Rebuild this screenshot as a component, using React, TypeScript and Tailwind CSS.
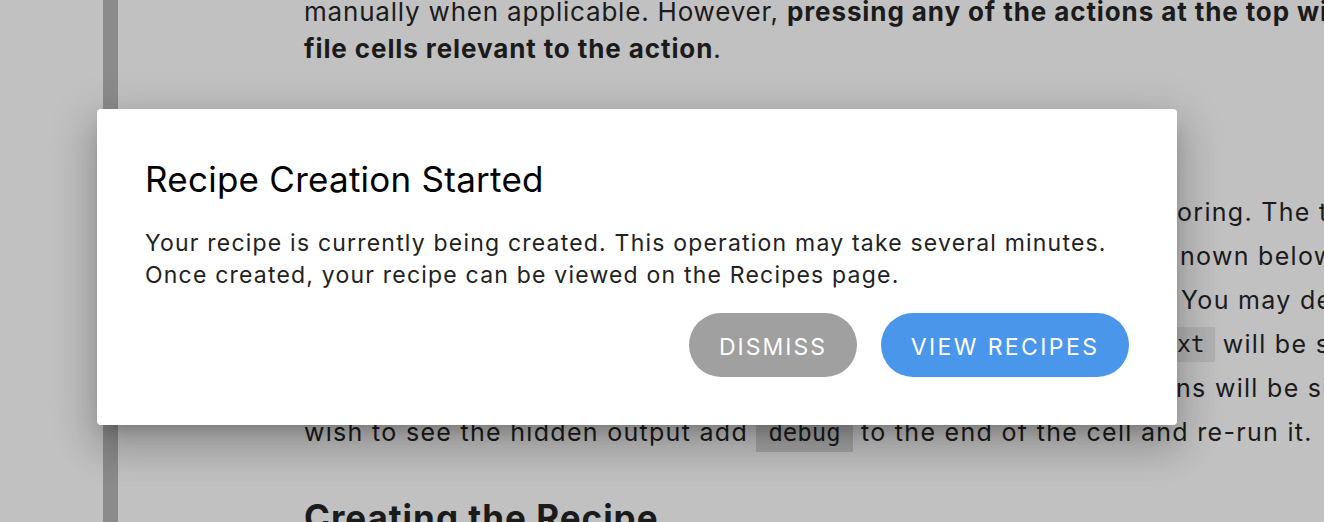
export default function App() {
  return (
    <main className="relative h-[522px] w-[1324px] overflow-hidden bg-[#c1c1c1] font-['Inter',sans-serif] text-[#1b1b1b]">
      {/* page behind the dimmed overlay */}
      <div className="flex h-full">
        <div className="w-[103px] shrink-0" />
        <div className="w-[15px] shrink-0 bg-[#8b8b8b]" />
        <div className="w-[186px] shrink-0" />

        <article className="min-w-0 flex-1 whitespace-nowrap text-[25px] tracking-[1.3px]">
          <div className="mt-[-7px] text-[26px] leading-[37px] tracking-[0.8px]">
            <div>
              manually when applicable. However,{" "}
              <b className="font-bold tracking-[0.9px]">pressing any of the actions at the top will run the</b>
            </div>
            <div>
              <b className="font-bold tracking-[0.9px]">file cells relevant to the action</b>.
            </div>
          </div>

          <h3 className="mt-[50px] h-[73px] text-[30px] font-bold leading-[40px]">Monitoring</h3>

          <div className="leading-[44px]">
            <div className="flex">
              <span className="inline-block w-[873px] shrink-0 overflow-hidden">The cells below are used for recipe monit</span>
              <span className="shrink-0">oring. The table</span>
            </div>
            <div className="flex">
              <span className="inline-block w-[876px] shrink-0 overflow-hidden">updates every few seconds and progress is sh</span>
              <span className="shrink-0">nown below the</span>
            </div>
            <div className="flex">
              <span className="inline-block w-[877px] shrink-0 overflow-hidden">cell once the recipe creation has begun.</span>
              <span className="shrink-0">You may define</span>
            </div>
            <div className="flex items-center">
              <span className="inline-block w-[873px] shrink-0 overflow-hidden">any options you like; the output of output.t</span>
              <code className="shrink-0 bg-[#b1b1b1] pr-[10px] font-['DejaVu_Sans_Mono',monospace] text-[23px] leading-[35px] tracking-normal">xt</code>
              <span className="ml-[8px] shrink-0">will be shown</span>
            </div>
            <div className="flex">
              <span className="inline-block w-[872px] shrink-0 overflow-hidden">here and the rest of the cell's actio</span>
              <span className="shrink-0">ns will be silent. If you</span>
            </div>
            <div>
              wish to see the hidden output add{" "}
              <code className="bg-[#a4a4a4] px-[12px] py-[5px] font-['DejaVu_Sans_Mono',monospace] text-[24px] tracking-normal">debug</code>{" "}
              to the end of the cell and re-run it.
            </div>
          </div>

          <h2 className="mt-[42px] text-[35px] font-bold leading-[40px] tracking-[1px]">Creating the Recipe</h2>
        </article>
      </div>

      {/* dialog */}
      <div className="absolute inset-0 pl-[97px] pt-[109px]">
        <section className="w-[1080px] rounded-[4px] bg-white p-12 shadow-[0_11px_15px_-7px_rgba(0,0,0,0.2),0_24px_38px_3px_rgba(0,0,0,0.14),0_9px_46px_8px_rgba(0,0,0,0.12)]">
          <h1 className="text-[35px] font-normal leading-[44px] tracking-[0.25px] text-black">Recipe Creation Started</h1>
          <p className="mt-[26px] text-[23px] leading-[32px] tracking-[1.2px] text-[#222]">
            Your recipe is currently being created. This operation may take several minutes.
            <br />
            Once created, your recipe can be viewed on the Recipes page.
          </p>
          <div className="mt-[22px] flex justify-end gap-6">
            <button className="h-16 w-[168px] rounded-full bg-[#a0a0a0] pt-1 text-[23px] uppercase tracking-[2px] text-white">
              Dismiss
            </button>
            <button className="h-16 w-[248px] rounded-full bg-[#4996ea] pt-1 text-[23px] uppercase tracking-[2.4px] text-white">
              View Recipes
            </button>
          </div>
        </section>
      </div>
    </main>
  );
}
